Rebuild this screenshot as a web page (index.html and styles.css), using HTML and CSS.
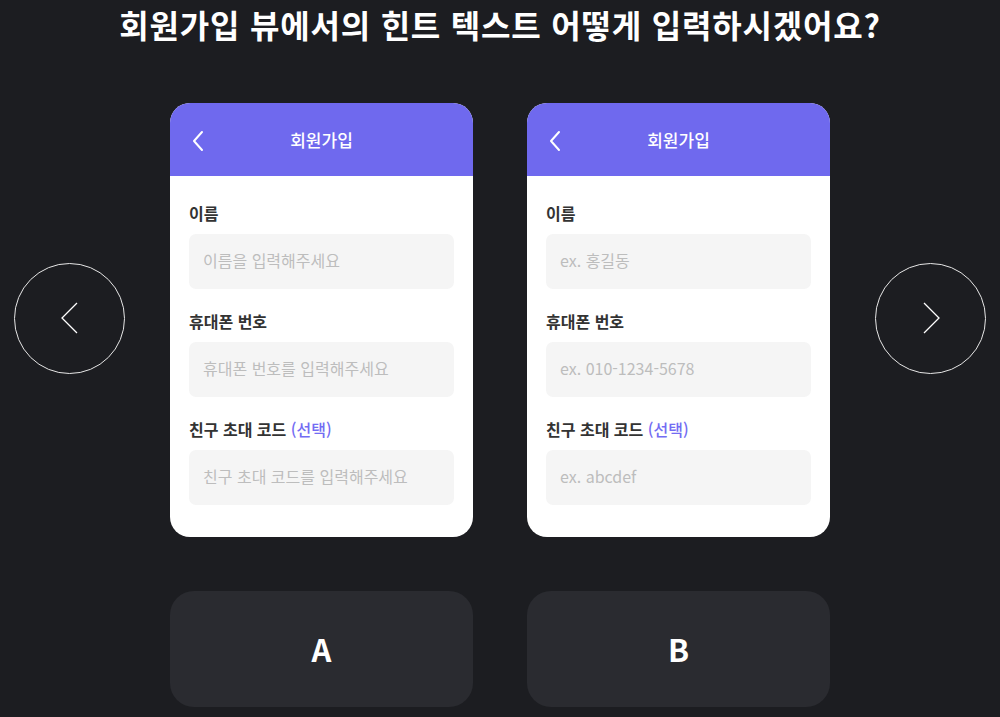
FILE: index.html
```html
<!DOCTYPE html>
<html lang="ko">
<head>
    <meta charset="UTF-8">
    <meta name="viewport" content="width=device-width, initial-scale=1.0">
    <title>Hint Text A/B</title>
    <link rel="stylesheet" href="styles.css">
</head>
<body>
    <h1 class="question">회원가입 뷰에서의 힌트 텍스트 어떻게 입력하시겠어요?</h1>

    <div class="stage">
        <button class="nav-btn" aria-label="이전">
            <svg width="20" height="34" viewBox="0 0 20 34"><polyline points="17,2 2,17 17,32" fill="none" stroke="#fff" stroke-width="1.3"/></svg>
        </button>

        <div class="cards">
            <div class="phone">
                <div class="phone-header">
                    <svg class="back" width="12" height="22" viewBox="0 0 12 22"><polyline points="10,2 2,11 10,20" fill="none" stroke="#fff" stroke-width="2" stroke-linecap="round" stroke-linejoin="round"/></svg>
                    <span class="phone-title">회원가입</span>
                </div>
                <div class="phone-body">
                    <label class="field-label">이름</label>
                    <input class="field" type="text" placeholder="이름을 입력해주세요">
                    <label class="field-label">휴대폰 번호</label>
                    <input class="field" type="text" placeholder="휴대폰 번호를 입력해주세요">
                    <label class="field-label">친구 초대 코드 <span class="optional">(선택)</span></label>
                    <input class="field" type="text" placeholder="친구 초대 코드를 입력해주세요">
                </div>
            </div>

            <div class="phone">
                <div class="phone-header">
                    <svg class="back" width="12" height="22" viewBox="0 0 12 22"><polyline points="10,2 2,11 10,20" fill="none" stroke="#fff" stroke-width="2" stroke-linecap="round" stroke-linejoin="round"/></svg>
                    <span class="phone-title">회원가입</span>
                </div>
                <div class="phone-body">
                    <label class="field-label">이름</label>
                    <input class="field" type="text" placeholder="ex. 홍길동">
                    <label class="field-label">휴대폰 번호</label>
                    <input class="field" type="text" placeholder="ex. 010-1234-5678">
                    <label class="field-label">친구 초대 코드 <span class="optional">(선택)</span></label>
                    <input class="field" type="text" placeholder="ex. abcdef">
                </div>
            </div>
        </div>

        <button class="nav-btn" aria-label="다음">
            <svg width="20" height="34" viewBox="0 0 20 34"><polyline points="3,2 18,17 3,32" fill="none" stroke="#fff" stroke-width="1.3"/></svg>
        </button>
    </div>

    <div class="choices">
        <button class="choice">A</button>
        <button class="choice">B</button>
    </div>
</body>
</html>
```

FILE: styles.css
```css
body {
    font-family: "Noto Sans CJK KR", "Noto Sans", sans-serif;
    background-color: #1c1d21;
    margin: 0;
    height: 717px;
    overflow: hidden;
}

.question {
    margin: 0;
    font-size: 32px;
    line-height: 48px;
    font-weight: 700;
    color: #fff;
    text-align: center;
    letter-spacing: 0.8px;
}

.stage {
    display: flex;
    justify-content: space-between;
    align-items: center;
    padding: 0 14px 0 14px;
    margin-top: 55px;
}

.nav-btn {
    width: 111px;
    height: 111px;
    margin-bottom: 4px;
    border-radius: 50%;
    border: 1px solid #e6e6e6;
    background: transparent;
    display: flex;
    align-items: center;
    justify-content: center;
    padding: 0;
    cursor: pointer;
}

.nav-btn svg {
    display: block;
}

.cards,
.choices {
    display: grid;
    grid-template-columns: 303px 303px;
    column-gap: 54px;
}

.choices {
    justify-content: center;
    margin-top: 54px;
}

.phone {
    background-color: #fff;
    border-radius: 20px;
    overflow: hidden;
}

.phone-header {
    position: relative;
    height: 73px;
    background-color: #6f69ee;
    display: flex;
    align-items: center;
    justify-content: center;
}

.back {
    position: absolute;
    left: 22px;
    top: 27px;
}

.phone-title {
    color: #fff;
    font-size: 17px;
    font-weight: 500;
}

.phone-body {
    display: flex;
    flex-direction: column;
    padding: 27px 19px 32px;
}

.field-label {
    font-size: 16px;
    line-height: 20px;
    font-weight: 700;
    color: #333;
    margin-bottom: 11px;
}

.optional {
    color: #736cf3;
    font-weight: 500;
}

.field {
    box-sizing: border-box;
    height: 55px;
    border: none;
    border-radius: 7px;
    background-color: #f5f5f5;
    padding: 0 14px 4px;
    font-family: inherit;
    font-size: 16px;
    color: #333;
    margin-bottom: 22px;
    outline: none;
}

.field:last-child {
    margin-bottom: 0;
}

.field::placeholder {
    color: #bdbdbd;
}

.choice {
    height: 116px;
    border: none;
    border-radius: 24px;
    background-color: #2a2b30;
    color: #fff;
    font-family: inherit;
    font-size: 31px;
    font-weight: 700;
    padding-bottom: 2px;
    cursor: pointer;
}
```
